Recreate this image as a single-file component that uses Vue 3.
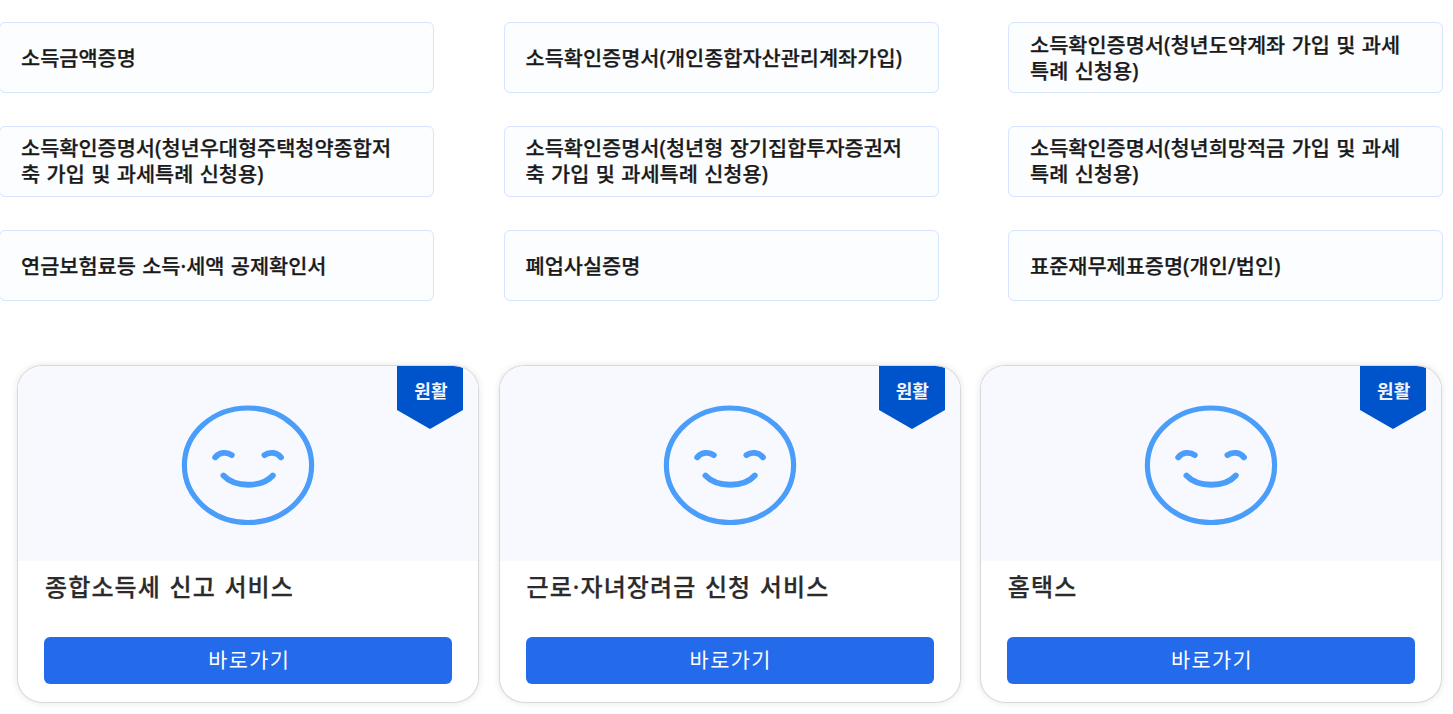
<script setup>
import { ref } from 'vue'

const certificates = ref([
  '소득금액증명',
  '소득확인증명서(개인종합자산관리계좌가입)',
  '소득확인증명서(청년도약계좌 가입 및 과세특례 신청용)',
  '소득확인증명서(청년우대형주택청약종합저축 가입 및 과세특례 신청용)',
  '소득확인증명서(청년형 장기집합투자증권저축 가입 및 과세특례 신청용)',
  '소득확인증명서(청년희망적금 가입 및 과세특례 신청용)',
  '연금보험료등 소득·세액 공제확인서',
  '폐업사실증명',
  '표준재무제표증명(개인/법인)',
])

const services = ref([
  { name: '종합소득세 신고 서비스', status: '원활' },
  { name: '근로·자녀장려금 신청 서비스', status: '원활' },
  { name: '홈택스', status: '원활' },
])
</script>

<template>
  <main class="page">
    <ul class="certList">
      <li v-for="item in certificates" :key="item" class="certItem">
        <span>{{ item }}</span>
      </li>
    </ul>

    <section class="services">
      <article v-for="service in services" :key="service.name" class="card">
        <div class="cardTop">
          <svg class="face" viewBox="0 0 134 120" fill="none" stroke="#4b9dfa" stroke-width="5.2" stroke-linecap="round">
            <ellipse cx="67" cy="60.3" rx="63.6" ry="57.3" />
            <g stroke-width="5.8">
              <path d="M34.200 52.300c4.200-5 11.600-5.800 16.600-2.200" />
              <path d="M83.400 50.100c5-3.600 12.400-2.800 16.600 2.200" />
              <path d="M42.400 70.500c11.500 12.300 38.500 12.300 49.400 0" />
            </g>
          </svg>
          <div class="badge">
            <svg class="ribbon" viewBox="0 0 66 63">
              <path d="M0 0H58Q63 0 66 2V44L33 63L0 44Z" fill="#0054cb" />
            </svg>
            <span class="badgeText">{{ service.status }}</span>
          </div>
        </div>
        <div class="cardBody">
          <h2>{{ service.name }}</h2>
          <button type="button">바로가기</button>
        </div>
      </article>
    </section>
  </main>
</template>

<style>
body {
  margin: 0;
  background: #fff;
  overflow: hidden;
}
</style>

<style scoped>
.page {
  box-sizing: border-box;
  width: 1453px;
  height: 714px;
  padding-top: 22px;
  overflow: hidden;
  font-family: "Noto Sans", "Noto Sans CJK KR", sans-serif;
}

.certList {
  display: grid;
  grid-template-columns: repeat(3, 435px);
  grid-auto-rows: 71px;
  column-gap: 69.5px;
  row-gap: 32.8px;
  margin: 0 0 0 -1px;
  padding: 0;
  list-style: none;
}

.certItem {
  box-sizing: border-box;
  display: flex;
  align-items: center;
  padding: 0 30px 0 21px;
  border: 1px solid #d6e4ff;
  border-radius: 6px;
  background: #fcfdff;
  color: #1a1a1a;
  font-size: 20.8px;
  font-weight: 500;
  line-height: 26px;
  word-spacing: 1px;
  word-break: break-all;
  -webkit-text-stroke: 0.25px #1a1a1a;
}

.certItem:nth-child(n + 7) {
  padding-top: 2px;
}

.services {
  display: grid;
  grid-template-columns: repeat(3, 461.8px);
  column-gap: 19.6px;
  margin: 64px 0 0 17.4px;
}

.card {
  box-sizing: border-box;
  height: 338px;
  border: 1px solid #d9d9d9;
  border-radius: 26px / 24px;
  background: #fff;
  box-shadow: 0 0 7px rgba(0, 0, 0, 0.1);
  overflow: hidden;
}

.cardTop {
  position: relative;
  display: flex;
  justify-content: center;
  box-sizing: border-box;
  height: 195px;
  padding-top: 39px;
  background: #f8f9ff;
}

.face {
  width: 134px;
  height: 120px;
}

.badge {
  position: absolute;
  top: 0;
  right: 14.8px;
  width: 66px;
  height: 63px;
}

.ribbon {
  display: block;
  width: 66px;
  height: 63px;
}

.badgeText {
  position: absolute;
  top: 13px;
  left: 0.5px;
  width: 100%;
  color: #eef4ff;
  font-size: 18px;
  font-weight: 700;
  line-height: 24px;
  text-align: center;
}

.cardBody {
  padding: 8px 26px 0;
}

.cardBody h2 {
  margin: 0 0 32px;
  color: #2b2b2b;
  font-size: 24px;
  font-weight: 500;
  line-height: 36px;
  letter-spacing: 1.1px;
  word-spacing: 1.2px;
  text-indent: 0.7px;
  white-space: nowrap;
  -webkit-text-stroke: 0.25px #2b2b2b;
}

.cardBody button {
  display: block;
  width: 100%;
  height: 47px;
  padding: 0 0 2px 2px;
  border: 0;
  border-radius: 6px;
  background: #246beb;
  color: #fff;
  font-family: inherit;
  font-size: 20.8px;
  font-weight: 400;
  letter-spacing: 1.4px;
}
</style>
